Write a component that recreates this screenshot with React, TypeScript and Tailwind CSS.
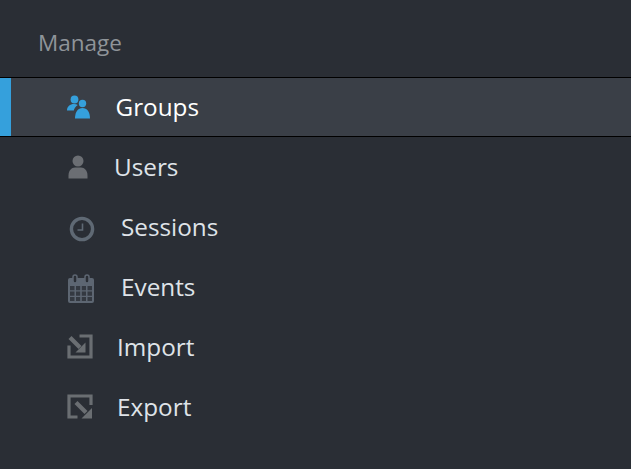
const Groups = () => (
  <svg width="24" height="24" viewBox="0 0 24 24" fill="#35a0dc" className="block">
    <circle cx="7.500" cy="4.500" r="3.900" />
    <path d="M0 15.500C0 11.500 3 9 7 9c1.500 0 2.800.4 3.800 1C8.500 11.500 7 14 6.800 15.500z" />
    <circle cx="15.500" cy="8.500" r="3.700" />
    <path d="M8 23.500c0-6.500 3-10.500 7.500-10.500s7.500 4 7.500 10.500z" />
  </svg>
);
const User = () => (
  <svg width="20" height="24" viewBox="0 0 20 24" fill="#6b6e73" className="block">
    <circle cx="10" cy="6" r="5.500" />
    <path d="M0.500 23.500v-3c0-5 3-8 6.500-8h6c3.500 0 6.500 3 6.500 8v3z" />
  </svg>
);
const Clock = () => (
  <svg width="26" height="26" viewBox="0 0 26 26" fill="none" stroke="#5f6974" className="block">
    <circle cx="13" cy="13" r="10.600" strokeWidth="3.400" />
    <path d="M13.500 7.500v6.500H8.500" strokeWidth="1.600" />
  </svg>
);
const Calendar = () => (
  <svg width="28" height="30" viewBox="0 0 28 30" className="block">
    <rect x="1" y="4" width="26" height="25" rx="2" fill="#5d6672" />
    <rect x="6" y="1" width="4" height="8" rx="2" fill="#2a2e35" stroke="#5d6672" strokeWidth="1.500" />
    <rect x="18" y="1" width="4" height="8" rx="2" fill="#2a2e35" stroke="#5d6672" strokeWidth="1.500" />
    <path d="M3 12h4.500v4.200H3zM9 12h4.200v4.200H9zM14.800 12H19v4.200h-4.200zM20.500 12H25v4.200h-4.500zM3 17.500h4.500v4.200H3zM9 17.500h4.200v4.200H9zM14.800 17.500H19v4.200h-4.200zM20.500 17.500H25v4.200h-4.500zM3 23h4.500v4H3zM9 23h4.200v4H9zM14.800 23H19v4h-4.200zM20.500 23H25v4h-4.500z" fill="#343941" />
  </svg>
);
const Import = () => (
  <svg width="26" height="25" viewBox="0 0 26 25" fill="none" stroke="#6a6e72" className="block">
    <path d="M2 11.500v11.500h22V2H12.500" strokeWidth="3.200" />
    <path d="M3 3.500l10 10" strokeWidth="4.200" />
    <path d="M18.500 8.500v10H8.500z" fill="#6a6e72" stroke="none" />
  </svg>
);
const Export = () => (
  <svg width="26" height="25" viewBox="0 0 26 25" fill="none" stroke="#6a6e72" className="block">
    <path d="M10.500 23H2V2h22v9" strokeWidth="3.200" />
    <path d="M9 8.500l10 10" strokeWidth="4.200" />
    <path d="M25 14v10.500H14.500z" fill="#6a6e72" stroke="none" />
  </svg>
);

export default function App() {
  return (
    <div className="w-[631px] h-[469px] overflow-hidden bg-[#2a2e35] font-['Open_Sans',sans-serif]">
      <div className="h-[77px] pl-[38px] pt-[26px] text-[22.500px] leading-[34px] text-[#8f9499]">Manage</div>
      <nav className="flex flex-col">
        <a className="flex h-[60px] items-center border-y border-black bg-[#3a3f47]">
          <span className="h-full w-[11px] bg-[#35a0dc]" />
          <span className="ml-[56px] w-[24px]"><Groups /></span>
          <span className="ml-[24.500px] text-[24.300px] text-white">Groups</span>
        </a>
        <a className="flex h-[60px] items-center">
          <span className="ml-[68px] w-[20px]"><User /></span>
          <span className="ml-[26px] text-[24.300px] text-[#dfe3e8]">Users</span>
        </a>
        <a className="flex h-[60px] items-center">
          <span className="ml-[69px] mt-[4px] w-[26px]"><Clock /></span>
          <span className="ml-[26px] text-[24.300px] text-[#dfe3e8]">Sessions</span>
        </a>
        <a className="flex h-[60px] items-center">
          <span className="ml-[67px] mt-[4px] w-[28px]"><Calendar /></span>
          <span className="ml-[26px] text-[24.300px] text-[#dfe3e8]">Events</span>
        </a>
        <a className="flex h-[60px] items-center">
          <span className="ml-[67px] mb-[2px] w-[26px]"><Import /></span>
          <span className="ml-[24px] text-[24.300px] text-[#dfe3e8]">Import</span>
        </a>
        <a className="flex h-[60px] items-center">
          <span className="ml-[67px] mb-[2px] w-[26px]"><Export /></span>
          <span className="ml-[24px] text-[24.300px] text-[#dfe3e8]">Export</span>
        </a>
      </nav>
    </div>
  );
}
